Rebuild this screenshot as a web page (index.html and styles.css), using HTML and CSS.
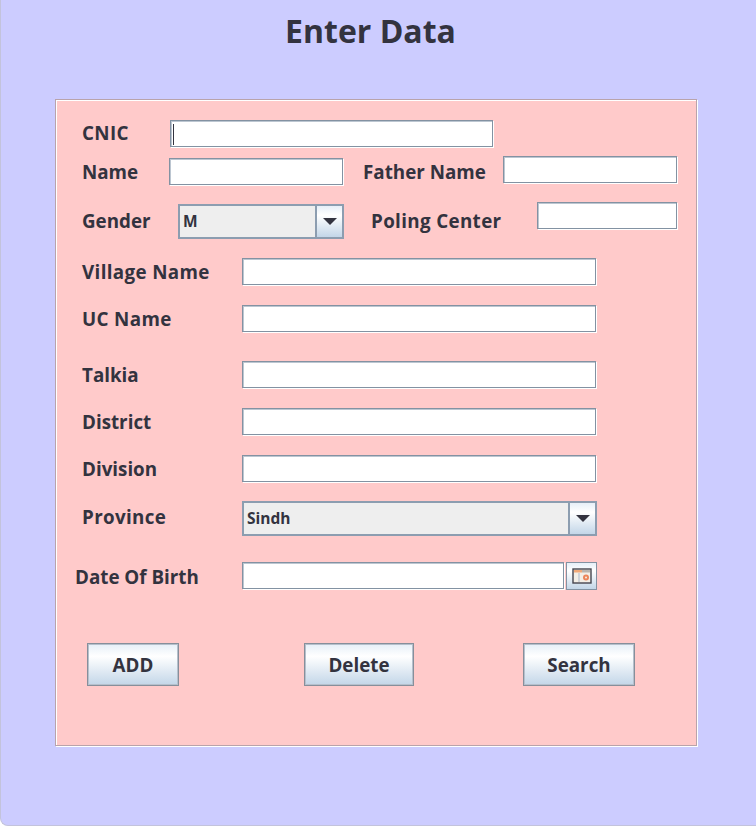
FILE: index.html
```html
<!DOCTYPE html>
<html lang="en">
<head>
    <meta charset="UTF-8">
    <title>Enter Data</title>
    <link rel="stylesheet" href="styles.css">
</head>
<body>
<div class="window">
    <h1 class="title">Enter Data</h1>

    <div class="panel">
        <div class="row row-cnic">
            <label class="label w-short label-wide">CNIC</label>
            <input class="field field-cnic" type="text">
        </div>

        <div class="row row-name">
            <label class="label w-short label-low">Name</label>
            <input class="field field-name" type="text">
            <label class="label label-father label-low">Father Name</label>
            <input class="field field-father" type="text">
        </div>

        <div class="row row-gender">
            <label class="label w-gender">Gender</label>
            <div class="combo combo-gender">
                <span class="combo-value">M</span>
                <span class="combo-arrow"><i class="arrow"></i></span>
            </div>
            <label class="label label-poling label-wide">Poling Center</label>
            <input class="field field-poling" type="text">
        </div>

        <div class="row row-village">
            <label class="label w-long label-wide">Village Name</label>
            <input class="field field-wide" type="text">
        </div>

        <div class="row row-uc">
            <label class="label w-long label-wide">UC Name</label>
            <input class="field field-wide" type="text">
        </div>

        <div class="row row-talkia">
            <label class="label w-long">Talkia</label>
            <input class="field field-wide" type="text">
        </div>

        <div class="row row-uc">
            <label class="label w-long">District</label>
            <input class="field field-wide" type="text">
        </div>

        <div class="row row-uc">
            <label class="label w-long">Division</label>
            <input class="field field-wide" type="text">
        </div>

        <div class="row row-province">
            <label class="label w-long label-high label-wide">Province</label>
            <div class="combo combo-province">
                <span class="combo-value">Sindh</span>
                <span class="combo-arrow"><i class="arrow"></i></span>
            </div>
        </div>

        <div class="row row-dob">
            <label class="label label-dob">Date Of Birth</label>
            <input class="field field-date" type="text">
            <button class="date-btn" type="button">
                <svg width="20" height="16" viewBox="0 0 20 16">
                    <rect x="1" y="1" width="18" height="14" fill="#f3eee6" stroke="#45454f" stroke-width="1.4"/>
                    <rect x="2" y="2" width="8" height="2.5" fill="#f0a878"/>
                    <rect x="10" y="2" width="8" height="2.5" fill="#b9b4ae"/>
                    <rect x="6" y="5" width="2" height="9" fill="#cfd3d8"/>
                    <circle cx="14" cy="9.5" r="3" fill="#ec855a"/>
                    <circle cx="14" cy="9.5" r="1" fill="#f3eee6"/>
                </svg>
            </button>
        </div>

        <div class="row row-buttons">
            <button class="btn btn-add" type="button">ADD</button>
            <button class="btn btn-delete" type="button">Delete</button>
            <button class="btn btn-search" type="button">Search</button>
        </div>
    </div>
</div>
</body>
</html>
```

FILE: styles.css
```css
* {
    box-sizing: border-box;
}

html, body {
    margin: 0;
    padding: 0;
}

body {
    background-color: #fff;
    font-family: "Open Sans", "Liberation Sans", sans-serif;
    color: #33333f;
}

.window {
    width: 756px;
    height: 826px;
    background-color: #ccccff;
    border-left: 1px solid #c3c3dc;
    border-bottom: 1px solid #c3c3dc;
    border-bottom-left-radius: 8px;
    overflow: hidden;
}

.title {
    margin: 0;
    width: 739px;
    height: 99px;
    padding-top: 9px;
    font-size: 32px;
    line-height: 44px;
    font-weight: 700;
    text-align: center;
}

.panel {
    width: 642px;
    height: 647px;
    margin-left: 54px;
    padding-left: 26px;
    background-color: #ffcaca;
    border: 1px solid #b9a3ab;
    box-shadow: inset 1px 1px 0 #fff, 1px 1px 0 #fff;
}

.row {
    display: flex;
    align-items: center;
}

.row-cnic { margin-top: 19px; height: 28px; }
.row-name { margin-top: 9px; height: 29px; }
.row-gender { margin-top: 17px; height: 37px; }
.row-village { margin-top: 19px; height: 27px; }
.row-uc { margin-top: 20px; height: 27px; }
.row-talkia { margin-top: 29px; height: 27px; }
.row-province { margin-top: 19px; height: 35px; }
.row-dob { margin-top: 26px; height: 28px; }
.row-buttons { margin-top: 53px; height: 43px; margin-left: 5px; }

.label {
    flex: none;
    font-size: 18.8px;
    font-weight: 700;
    white-space: nowrap;
}

.label-wide { letter-spacing: 0.35px; }
.label-low { padding-top: 2px; }
.label-high { padding-bottom: 3px; }

.w-short { width: 87px; }
.w-gender { width: 96px; }
.w-long { width: 160px; }

.label-father { width: 140px; margin-left: 20px; }
.label-poling { width: 166px; margin-left: 27px; }
.label-dob { width: 167px; margin-left: -7px; padding-top: 2px; }

.field {
    flex: none;
    height: 27px;
    padding: 0;
    background-color: #fff;
    border: 1px solid #8392a2;
    border-radius: 0;
    box-shadow: inset 1px 1px 0 #bcc6d1, 1px 1px 0 #fff;
    outline: none;
}

.field-cnic {
    width: 323px;
    height: 27px;
    margin-left: 1px;
    background: linear-gradient(#33333f, #33333f) 2px 3px / 1px 21px no-repeat #fff;
}

.field-name { width: 174px; align-self: flex-end; }
.field-father { width: 174px; align-self: flex-start; }
.field-poling { width: 140px; align-self: flex-start; }
.field-wide { width: 354px; }
.field-date { width: 322px; align-self: flex-start; }

.combo {
    flex: none;
    display: flex;
    height: 35px;
    background-color: #eeeeee;
    border: 2px solid #8c9db0;
}

.combo-gender { width: 166px; align-self: flex-end; }
.combo-province { width: 355px; }

.combo-value {
    flex: 1;
    padding-left: 3px;
    font-size: 15.5px;
    font-weight: 700;
    line-height: 30px;
}

.combo-arrow {
    flex: none;
    width: 27px;
    display: flex;
    align-items: center;
    justify-content: center;
    border-left: 2px solid #8c9db0;
    background: linear-gradient(#e6eff8, #ffffff 30%, #c3d6e8);
}

.arrow {
    width: 0;
    height: 0;
    border-left: 7px solid transparent;
    border-right: 7px solid transparent;
    border-top: 7px solid #33333f;
}

.date-btn {
    flex: none;
    display: flex;
    align-items: center;
    justify-content: center;
    width: 31px;
    height: 28px;
    margin-left: 2px;
    padding: 0;
    border: 1px solid #8392a2;
    background: linear-gradient(#e6eff8, #ffffff 30%, #c3d6e8);
}

.btn {
    flex: none;
    height: 43px;
    padding: 0;
    font-family: inherit;
    font-size: 18.8px;
    font-weight: 700;
    color: #33333f;
    border: 1px solid #868f9b;
    border-radius: 0;
    box-shadow: inset 0 0 0 1px #b6c0cc;
    background: linear-gradient(#e6eff8, #ffffff 30%, #c3d6e8);
}

.btn-add { width: 92px; }
.btn-delete { width: 110px; margin-left: 125px; }
.btn-search { width: 112px; margin-left: 109px; }
```
